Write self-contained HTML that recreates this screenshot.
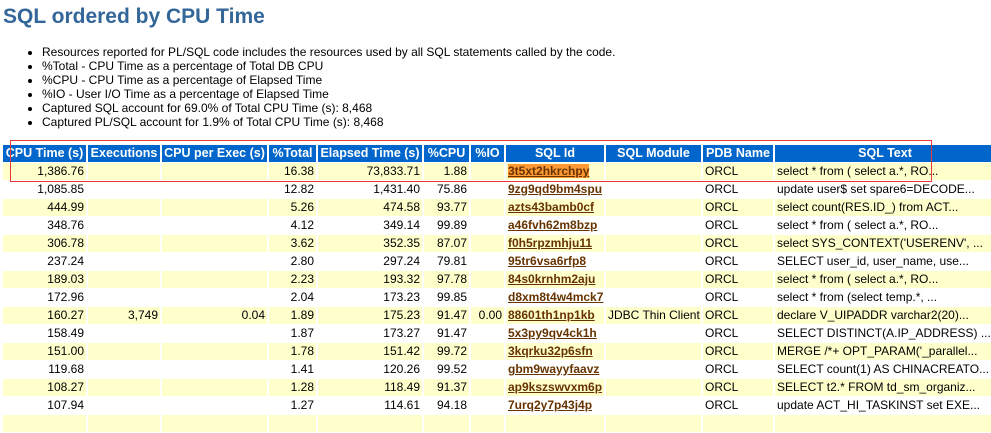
<!DOCTYPE html>
<html><head><meta charset="utf-8"><style>
body{margin:0;background:#fff;font-family:"Liberation Sans",Arial,sans-serif;width:991px;height:418px;overflow:hidden;position:relative}
h1{position:absolute;left:3px;top:5px;margin:0;font-size:21px;font-weight:bold;color:#336699}
ul{position:absolute;left:0;top:45px;margin:0;padding-left:42px;font-size:12px;line-height:14px;color:#000}
table{position:absolute;left:1px;top:144px;width:994px;border-collapse:separate;border-spacing:2px 1px;table-layout:fixed;font-size:12px}
td,th{box-sizing:border-box;height:17px;line-height:17px;padding:0 2px;white-space:nowrap;overflow:hidden}
th{background:#0066cc;color:#fff;font-weight:bold;text-align:center;padding:0 1px;font-size:12.5px}
td{text-align:right;color:#000}
tr.a td{background:#ffffcc}
td.l{text-align:left}
td a{color:#663300;font-weight:bold;text-decoration:underline}
.hl{background:#ff9933}
.box{position:absolute;left:10px;top:140px;width:920px;height:40px;border:1px solid #e83a3a}
</style></head><body>
<h1>SQL ordered by CPU Time</h1>
<ul>
<li>Resources reported for PL/SQL code includes the resources used by all SQL statements called by the code.</li>
<li>%Total - CPU Time as a percentage of Total DB CPU</li>
<li>%CPU - CPU Time as a percentage of Elapsed Time</li>
<li>%IO - User I/O Time as a percentage of Elapsed Time</li>
<li>Captured SQL account for 69.0% of Total CPU Time (s): 8,468</li>
<li>Captured PL/SQL account for 1.9% of Total CPU Time (s): 8,468</li>
</ul>
<table>
<colgroup><col style="width:83px"><col style="width:72px"><col style="width:105px"><col style="width:47px"><col style="width:104px"><col style="width:45px"><col style="width:33px"><col style="width:98px"><col style="width:95px"><col style="width:70px"><col style="width:220px"></colgroup>
<tr><th>CPU Time (s)</th><th>Executions</th><th>CPU per Exec (s)</th><th>%Total</th><th>Elapsed Time (s)</th><th>%CPU</th><th>%IO</th><th>SQL Id</th><th>SQL Module</th><th>PDB Name</th><th>SQL Text</th></tr>
<tr class="a"><td>1,386.76</td><td></td><td></td><td>16.38</td><td>73,833.71</td><td>1.88</td><td></td><td class="l"><a class="hl">3t5xt2hkrchpy</a></td><td class="l"></td><td class="l">ORCL</td><td class="l">select * from ( select a.*, RO...</td></tr>
<tr><td>1,085.85</td><td></td><td></td><td>12.82</td><td>1,431.40</td><td>75.86</td><td></td><td class="l"><a>9zg9qd9bm4spu</a></td><td class="l"></td><td class="l">ORCL</td><td class="l">update user$ set spare6=DECODE...</td></tr>
<tr class="a"><td>444.99</td><td></td><td></td><td>5.26</td><td>474.58</td><td>93.77</td><td></td><td class="l"><a>azts43bamb0cf</a></td><td class="l"></td><td class="l">ORCL</td><td class="l">select count(RES.ID_) from ACT...</td></tr>
<tr><td>348.76</td><td></td><td></td><td>4.12</td><td>349.14</td><td>99.89</td><td></td><td class="l"><a>a46fvh62m8bzp</a></td><td class="l"></td><td class="l">ORCL</td><td class="l">select * from ( select a.*, RO...</td></tr>
<tr class="a"><td>306.78</td><td></td><td></td><td>3.62</td><td>352.35</td><td>87.07</td><td></td><td class="l"><a>f0h5rpzmhju11</a></td><td class="l"></td><td class="l">ORCL</td><td class="l">select SYS_CONTEXT('USERENV', ...</td></tr>
<tr><td>237.24</td><td></td><td></td><td>2.80</td><td>297.24</td><td>79.81</td><td></td><td class="l"><a>95tr6vsa6rfp8</a></td><td class="l"></td><td class="l">ORCL</td><td class="l">SELECT user_id, user_name, use...</td></tr>
<tr class="a"><td>189.03</td><td></td><td></td><td>2.23</td><td>193.32</td><td>97.78</td><td></td><td class="l"><a>84s0krnhm2aju</a></td><td class="l"></td><td class="l">ORCL</td><td class="l">select * from ( select a.*, RO...</td></tr>
<tr><td>172.96</td><td></td><td></td><td>2.04</td><td>173.23</td><td>99.85</td><td></td><td class="l"><a>d8xm8t4w4mck7</a></td><td class="l"></td><td class="l">ORCL</td><td class="l">select * from (select temp.*, ...</td></tr>
<tr class="a"><td>160.27</td><td>3,749</td><td>0.04</td><td>1.89</td><td>175.23</td><td>91.47</td><td>0.00</td><td class="l"><a>88601th1np1kb</a></td><td class="l">JDBC Thin Client</td><td class="l">ORCL</td><td class="l">declare V_UIPADDR varchar2(20)...</td></tr>
<tr><td>158.49</td><td></td><td></td><td>1.87</td><td>173.27</td><td>91.47</td><td></td><td class="l"><a>5x3py9qv4ck1h</a></td><td class="l"></td><td class="l">ORCL</td><td class="l">SELECT DISTINCT(A.IP_ADDRESS) ...</td></tr>
<tr class="a"><td>151.00</td><td></td><td></td><td>1.78</td><td>151.42</td><td>99.72</td><td></td><td class="l"><a>3kqrku32p6sfn</a></td><td class="l"></td><td class="l">ORCL</td><td class="l">MERGE /*+ OPT_PARAM('_parallel...</td></tr>
<tr><td>119.68</td><td></td><td></td><td>1.41</td><td>120.26</td><td>99.52</td><td></td><td class="l"><a>gbm9wayyfaavz</a></td><td class="l"></td><td class="l">ORCL</td><td class="l">SELECT count(1) AS CHINACREATO...</td></tr>
<tr class="a"><td>108.27</td><td></td><td></td><td>1.28</td><td>118.49</td><td>91.37</td><td></td><td class="l"><a>ap9kszswvxm6p</a></td><td class="l"></td><td class="l">ORCL</td><td class="l">SELECT t2.* FROM td_sm_organiz...</td></tr>
<tr><td>107.94</td><td></td><td></td><td>1.27</td><td>114.61</td><td>94.18</td><td></td><td class="l"><a>7urq2y7p43j4p</a></td><td class="l"></td><td class="l">ORCL</td><td class="l">update ACT_HI_TASKINST set EXE...</td></tr>
<tr class="a"><td>&nbsp;</td><td></td><td></td><td></td><td></td><td></td><td></td><td></td><td></td><td></td><td></td></tr>
</table>
<div class="box"></div>
</body></html>
